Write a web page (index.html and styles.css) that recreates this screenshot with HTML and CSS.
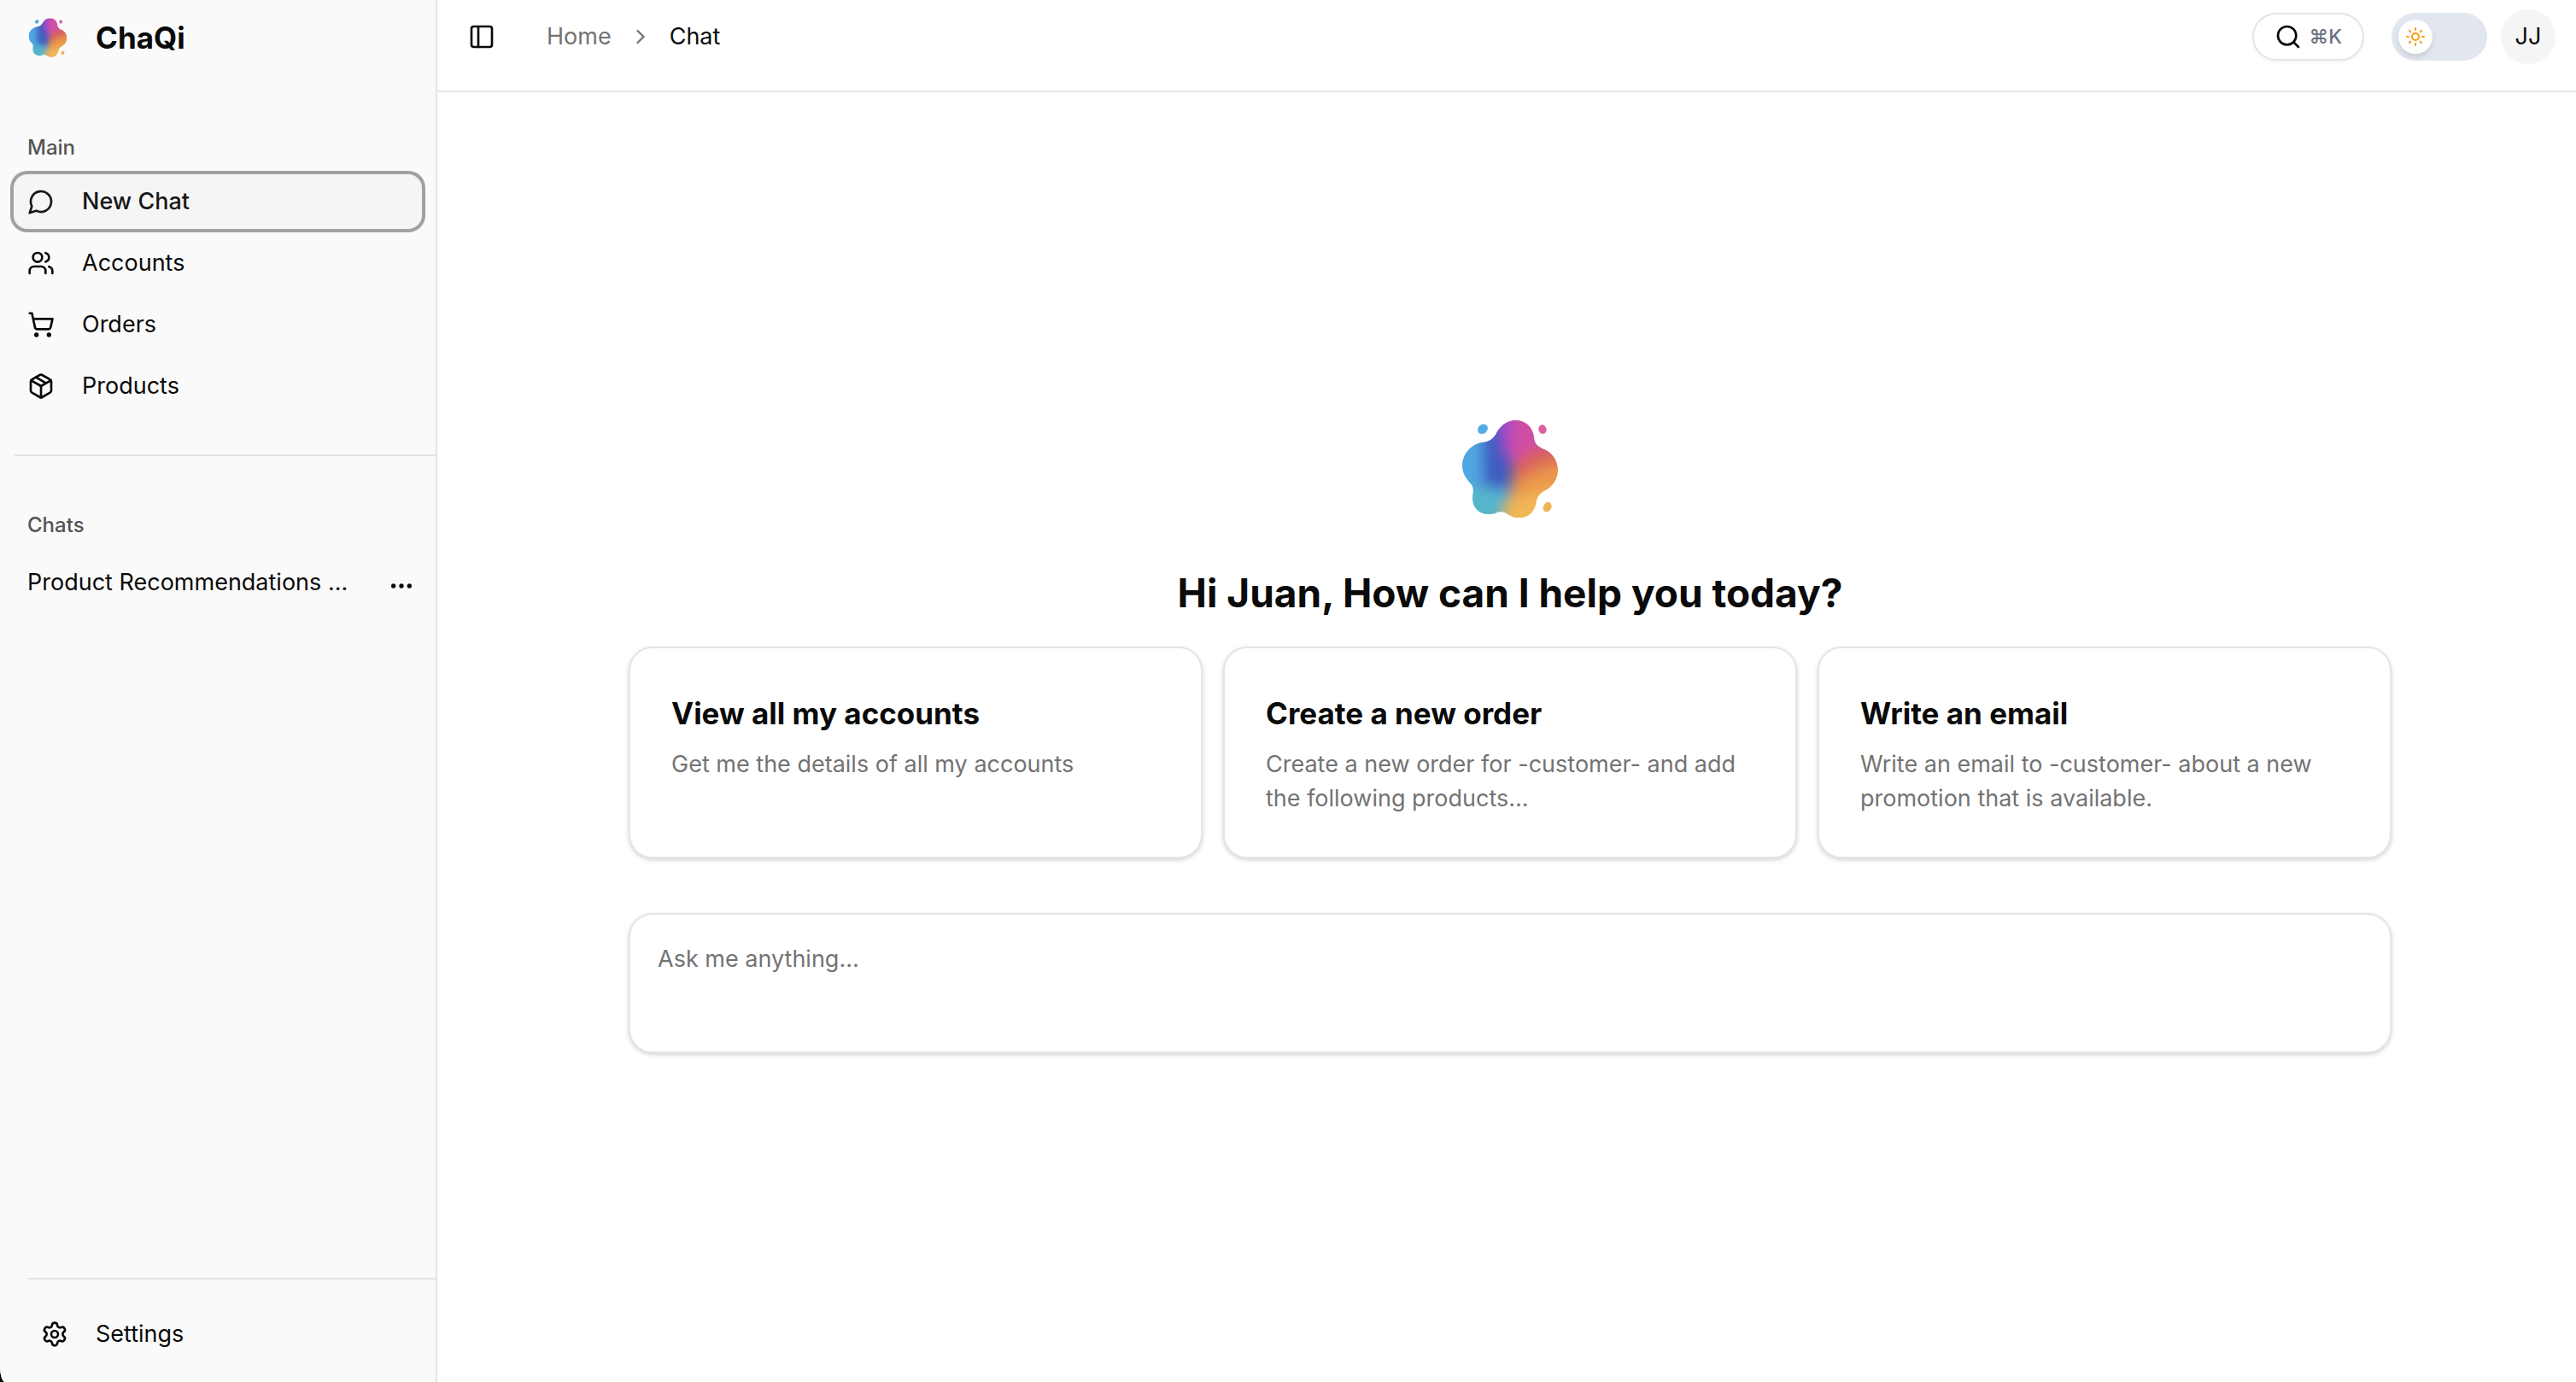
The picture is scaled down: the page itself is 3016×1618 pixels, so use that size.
FILE: index.html
```html
<!DOCTYPE html>
<html lang="en">
<head>
<meta charset="utf-8">
<meta name="viewport" content="width=device-width, initial-scale=1">
<title>ChaQi</title>
<link rel="stylesheet" href="styles.css">
</head>
<body>
<svg class="defs" aria-hidden="true">
  <defs>
    <filter id="soft" x="-50%" y="-50%" width="200%" height="200%" color-interpolation-filters="sRGB"><feGaussianBlur stdDeviation="22"/></filter>
    <clipPath id="blob"><path d="M285 65C320 65 346 90 349 125C351 150 365 158 385 167C415 180 432 208 433 238C433 270 416 298 388 312C368 323 360 335 357 355C350 388 327 408 298 408C278 408 265 400 250 391C238 385 226 386 214 391C204 395 195 396 189 395C155 395 132 370 133 338C134 318 140 305 128 289C110 270 97 250 97 224C98 183 128 150 165 143C190 140 203 132 214 115C230 85 252 65 285 65Z"/></clipPath>
    <symbol id="logo" viewBox="85 56 360 360">
      <g clip-path="url(#blob)">
        <g filter="url(#soft)">
          <rect x="0" y="0" width="540" height="480" fill="#4fa6e2"/>
          <path d="M60 305L225 290L235 480L60 480Z" fill="#55b6cb"/>
          <path d="M170 60L265 60L280 300L175 300Z" fill="#3f5cc0"/>
          <path d="M205 0L290 0L280 200L235 180Z" fill="#a548cc"/>
          <path d="M275 0L420 0L420 190L330 210L262 225Z" fill="#cf4ea4"/>
          <path d="M350 170L520 130L520 250L270 280L275 225Z" fill="#d9655a"/>
          <path d="M270 282L390 222L540 200L540 480L240 480Z" fill="#ea974b"/>
          <path d="M240 350L420 300L480 500L235 500Z" fill="#f1b655"/>
        </g>
      </g>
      <ellipse cx="169" cy="96" rx="19" ry="16" transform="rotate(-40 169 96)" fill="#56abe6"/>
      <ellipse cx="379" cy="97" rx="14" ry="16" transform="rotate(-15 379 97)" fill="#dc60a2"/>
      <ellipse cx="396" cy="370" rx="14" ry="18" transform="rotate(28 396 370)" fill="#f0b356"/>
    </symbol>
  </defs>
</svg>
<div class="app">
  <aside class="sidebar">
    <div class="brand">
      <svg class="brand-logo" aria-hidden="true"><use href="#logo"/></svg>
      <span class="brand-name">ChaQi</span>
    </div>
    <nav class="group" aria-label="Main">
      <h2 class="group-label">Main</h2>
      <ul class="menu">
        <li><a class="item item-active" href="#new"><svg class="icon" viewBox="0 0 24 24"><path d="M7.9 20A9 9 0 1 0 4 16.1L2 22Z"/></svg>New Chat</a></li>
        <li><a class="item" href="#accounts"><svg class="icon" viewBox="0 0 24 24"><path d="M16 21v-2a4 4 0 0 0-4-4H6a4 4 0 0 0-4 4v2"/><circle cx="9" cy="7" r="4"/><path d="M22 21v-2a4 4 0 0 0-3-3.87M16 3.13a4 4 0 0 1 0 7.75"/></svg>Accounts</a></li>
        <li><a class="item" href="#orders"><svg class="icon" viewBox="0 0 24 24"><circle cx="8" cy="21" r="1"/><circle cx="19" cy="21" r="1"/><path d="M2.05 2.05h2l2.66 12.42a2 2 0 0 0 2 1.58h9.78a2 2 0 0 0 1.95-1.57l1.65-7.43H5.12"/></svg>Orders</a></li>
        <li><a class="item" href="#products"><svg class="icon" viewBox="0 0 24 24"><path d="M11 21.73a2 2 0 0 0 2 0l7-4A2 2 0 0 0 21 16V8a2 2 0 0 0-1-1.73l-7-4a2 2 0 0 0-2 0l-7 4A2 2 0 0 0 3 8v8a2 2 0 0 0 1 1.73z"/><path d="M12 22V12"/><path d="M3.3 7L12 12l8.7-5M7.5 4.27l9 5.15"/></svg>Products</a></li>
      </ul>
    </nav>
    <section class="group chats">
      <h2 class="group-label">Chats</h2>
      <div class="chat-row">
        <a class="chat-link" href="#chat">Product Recommendations ...</a>
        <button class="icon-button chat-more" type="button" aria-label="More"><svg class="icon" viewBox="0 0 24 24"><circle cx="12" cy="12" r="1"/><circle cx="19" cy="12" r="1"/><circle cx="5" cy="12" r="1"/></svg></button>
      </div>
    </section>
    <div class="sidebar-footer">
      <a class="item" href="#settings"><svg class="icon" viewBox="0 0 24 24"><path d="M9.67 4.14a2.34 2.34 0 0 1 4.66 0 2.34 2.34 0 0 0 3.32 1.91 2.34 2.34 0 0 1 2.33 4.04 2.34 2.34 0 0 0 0 3.83 2.34 2.34 0 0 1-2.33 4.03 2.34 2.34 0 0 0-3.32 1.92 2.34 2.34 0 0 1-4.66 0 2.34 2.34 0 0 0-3.32-1.92 2.34 2.34 0 0 1-2.33-4.03 2.34 2.34 0 0 0 0-3.83 2.34 2.34 0 0 1 2.33-4.04 2.34 2.34 0 0 0 3.32-1.91"/><circle cx="12" cy="12" r="3"/></svg>Settings</a>
    </div>
  </aside>
  <div class="page">
    <header class="topbar">
      <button class="icon-button" type="button" aria-label="Toggle sidebar"><svg class="icon" viewBox="0 0 24 24"><rect x="3" y="3" width="18" height="18" rx="2"/><path d="M9 3v18"/></svg></button>
      <nav class="crumbs" aria-label="Breadcrumb">
        <a class="crumb-link" href="#home">Home</a>
        <svg class="chevron" viewBox="0 0 24 24"><path d="M9 18l6-6-6-6"/></svg>
        <span>Chat</span>
      </nav>
      <div class="tools">
        <button class="search" type="button"><svg class="icon" viewBox="0 0 24 24"><circle cx="11" cy="11" r="8"/><path d="M21 21l-4.3-4.3"/></svg><span class="shortcut">⌘K</span></button>
        <label class="switch">
          <input class="switch-input" type="checkbox" role="switch" aria-label="Dark mode">
          <span class="knob"><svg class="sun" viewBox="0 0 24 24"><circle cx="12" cy="12" r="4"/><path d="M12 2v2M12 20v2M4.93 4.93l1.41 1.41M17.66 17.66l1.41 1.41M2 12h2M20 12h2M6.34 17.66l-1.41 1.41M19.07 4.93l-1.41 1.41"/></svg></span>
        </label>
        <button class="avatar" type="button">JJ</button>
      </div>
    </header>
    <main class="main">
      <div class="content">
        <svg class="hero-logo" aria-hidden="true"><use href="#logo"/></svg>
        <h1 class="greeting">Hi Juan, How can I help you today?</h1>
        <div class="cards">
          <button class="card" type="button"><span class="card-title">View all my accounts</span><span class="card-text">Get me the details of all my accounts</span></button>
          <button class="card" type="button"><span class="card-title">Create a new order</span><span class="card-text">Create a new order for -customer- and add the following products...</span></button>
          <button class="card" type="button"><span class="card-title">Write an email</span><span class="card-text">Write an email to -customer- about a new promotion that is available.</span></button>
        </div>
        <textarea class="prompt" aria-label="Message" placeholder="Ask me anything..."></textarea>
      </div>
    </main>
  </div>
</div>
</body>
</html>
```
FILE: styles.css
```css
:root {
  --text: #0a0a0a;
  --muted: #737373;
  --line: #e5e5e5;
  --shadow: 0 2px 6px rgba(0, 0, 0, .1), 0 2px 4px rgba(0, 0, 0, .08);
}
*, *::before, *::after { box-sizing: border-box; }
html { background: #000; }
body {
  margin: 0;
  color: var(--text);
  font: 400 27px/40px Inter, "Liberation Sans", sans-serif;
}
h1, h2, ul { margin: 0; padding: 0; }
ul { list-style: none; }
a { color: inherit; text-decoration: none; }
button, textarea { font: inherit; color: inherit; }
svg { display: block; flex: none; }
.defs { position: absolute; width: 0; height: 0; }

.app {
  display: flex;
  min-height: 100vh;
  background: #fff;
  border-bottom-left-radius: 6px 18px;
  overflow: hidden;
}
.icon {
  width: 32px;
  height: 32px;
  fill: none;
  stroke: currentColor;
  stroke-width: 2;
  stroke-linecap: round;
  stroke-linejoin: round;
}
.icon-button {
  display: flex;
  padding: 0;
  border: 0;
  background: none;
}

.sidebar {
  display: flex;
  flex: none;
  flex-direction: column;
  width: 512px;
  border-right: 2px solid var(--line);
  background: #fafafa;
}
.brand {
  display: flex;
  align-items: center;
  gap: 32px;
  height: 88px;
  padding: 0 32px;
}
.brand-logo { width: 48px; height: 48px; }
.brand-name { font-size: 35px; font-weight: 700; }
.group { padding: 52px 16px 48px; }
.group-label {
  height: 64px;
  padding: 0 16px;
  color: #545454;
  font-size: 24px;
  font-weight: 500;
  line-height: 66px;
}
.menu {
  display: flex;
  flex-direction: column;
  gap: 8px;
}
.item {
  display: flex;
  align-items: center;
  gap: 32px;
  height: 64px;
  padding: 0 16px;
  border-radius: 16px;
}
.item-active {
  background: #f5f5f5;
  box-shadow: 0 0 0 4px #a1a1a1;
  color: #171717;
  font-weight: 500;
}
.chats {
  margin-left: 16px;
  padding: 48px 24px 0 0;
  border-top: 2px solid var(--line);
}
.chat-row {
  display: flex;
  align-items: center;
  justify-content: space-between;
  height: 72px;
  padding-left: 16px;
}
.chat-more { padding-top: 8px; }
.sidebar-footer {
  margin: auto 0 0 32px;
  padding: 32px 0 24px;
  border-top: 2px solid var(--line);
}

/* The first menu is offset by its own padding, the chat list by its rule. */
.chats .group-label,
.chats .chat-row { padding-left: 16px; }

.page {
  display: flex;
  flex: 1;
  flex-direction: column;
  min-width: 0;
}
.topbar {
  display: flex;
  align-items: flex-start;
  gap: 60px;
  height: 108px;
  padding: 11px 24px 0 36px;
  border-bottom: 2px solid var(--line);
}
.topbar > * { min-height: 64px; align-items: center; }
.crumbs { display: flex; gap: 20px; }
.crumb-link { color: var(--muted); }
.chevron {
  width: 28px;
  height: 28px;
  fill: none;
  stroke: var(--muted);
  stroke-width: 2;
  stroke-linecap: round;
}
.tools {
  display: flex;
  gap: 16px;
  margin-left: auto;
}
.search {
  display: flex;
  align-items: center;
  gap: 8px;
  height: 56px;
  margin-right: 16px;
  padding: 0 24px;
  border: 2px solid var(--line);
  border-radius: 28px;
  background: #fff;
  box-shadow: 0 2px 4px rgba(0, 0, 0, .05);
}
.shortcut {
  color: #6b7280;
  font-size: 23px;
  font-weight: 500;
}
.switch {
  position: relative;
  width: 112px;
  height: 56px;
  padding: 8px;
  border-radius: 28px;
  background: #e1e6ef;
}
.switch-input {
  position: absolute;
  inset: 0;
  width: 100%;
  height: 100%;
  margin: 0;
  opacity: 0;
}
.knob {
  display: grid;
  place-items: center;
  width: 40px;
  height: 40px;
  border-radius: 50%;
  background: #fff;
  box-shadow: 0 4px 6px rgba(0, 0, 0, .1);
}
.sun {
  width: 24px;
  height: 24px;
  fill: none;
  stroke: #f59e0b;
  stroke-width: 2;
  stroke-linecap: round;
}
.avatar {
  width: 64px;
  height: 64px;
  padding: 0;
  border: 0;
  border-radius: 50%;
  background: #f5f5f5;
}

.main {
  display: flex;
  flex: 1;
  flex-direction: column;
  align-items: center;
  justify-content: center;
  padding: 0 24px 4px 32px;
}
.content {
  display: flex;
  flex-direction: column;
  align-items: center;
  width: 100%;
  max-width: 2064px;
}
.hero-logo { width: 120px; height: 120px; }
.greeting {
  margin: 53px 0 31px;
  font-size: 46px;
  font-weight: 700;
  line-height: 64px;
  text-align: center;
}
.cards {
  display: grid;
  grid-template-columns: repeat(3, 1fr);
  gap: 24px;
  width: 100%;
  margin-bottom: 64px;
}
.card {
  display: flex;
  flex-direction: column;
  gap: 12px;
  padding: 48px;
  border: 2px solid var(--line);
  border-radius: 28px;
  background: #fff;
  box-shadow: var(--shadow);
  text-align: left;
}
.card-title {
  font-size: 35px;
  font-weight: 700;
  line-height: 56px;
}
.card-text { color: var(--muted); }
.prompt {
  display: block;
  width: 100%;
  height: 164px;
  padding: 32px;
  border: 2px solid var(--line);
  border-radius: 28px;
  background: #fff;
  box-shadow: var(--shadow);
  resize: none;
}
.prompt::placeholder { color: var(--muted); opacity: 1; }
```
